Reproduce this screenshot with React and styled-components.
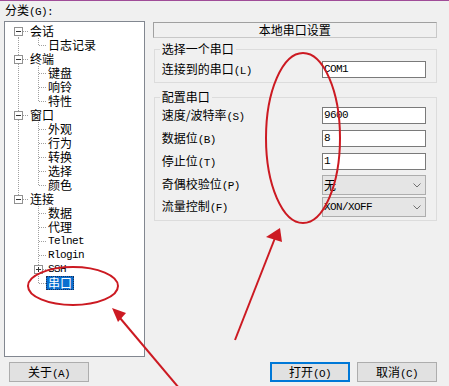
import React from 'react';
import styled, { createGlobalStyle } from 'styled-components';

const Global = createGlobalStyle`
  html, body { margin: 0; padding: 0; background: #f0f0f0; }
  body {
    font-family: "Noto Sans CJK SC", "Liberation Sans", sans-serif;
    font-size: 12px;
    color: #000;
  }
`;

const Window = styled.div`
  position: relative;
  width: 449px;
  height: 386px;
  box-sizing: border-box;
  background: #f0f0f0;
  border-top: 1px solid #a04c98;
  display: flex;
  flex-direction: column;
  padding: 0 12px 4px 4px;
  overflow: hidden;
`;

const Main = styled.div`
  display: flex;
  gap: 8px;
`;

const LeftCol = styled.div`
  width: 142px;
  display: flex;
  flex-direction: column;
`;

const CategoryLabel = styled.div`
  height: 20px;
  line-height: 18px;
  padding-left: 1px;
`;

const Hot = styled.span`
  font-family: "Liberation Mono", "DejaVu Sans Mono", monospace;
  font-size: 11px;
  letter-spacing: -0.6px;
`;

const TreeBox = styled.div`
  height: 336px;
  box-sizing: border-box;
  border: 1px solid #828790;
  background: #fff;
  padding-top: 2px;
`;

const TreeRow = styled.div`
  display: flex;
  height: 14px;
  align-items: stretch;
`;

const TreeLabel = styled.span`
  display: inline-block;
  height: 14px;
  line-height: 14px;
  padding: 0 2px;
  white-space: nowrap;
  ${p => p.$latin && `
    font-family: "Liberation Mono", "DejaVu Sans Mono", monospace;
    font-size: 11px;
    letter-spacing: -0.6px;
  `}
  ${p => p.$selected && `
    background: #0a6fcf;
    color: #fff;
    outline: 1px dotted #1b2f5a;
    outline-offset: -1px;
  `}
`;

const LINE = '#a0a0a0';

function ExpandBox({ x, plus }) {
  return (
    <g>
      <rect x={x + 0.5} y={3.5} width={8} height={8} fill="#fff" stroke="#919191" />
      <line x1={x + 2} y1={7.5} x2={x + 7} y2={7.5} stroke="#333" />
      {plus && <line x1={x + 4.5} y1={5} x2={x + 4.5} y2={10} stroke="#333" />}
    </g>
  );
}

function Guide({ item }) {
  const dash = '1 1';
  if (item.level === 0) {
    return (
      <svg width="23" height="14" style={{ display: 'block', flex: 'none' }}>
        <line x1={13.5} y1={item.up ? 0 : 7} x2={13.5} y2={item.down ? 14 : 8} stroke={LINE} strokeDasharray={dash} />
        <line x1={18} y1={7.5} x2={23} y2={7.5} stroke={LINE} strokeDasharray={dash} />
        <ExpandBox x={9} />
      </svg>
    );
  }
  return (
    <svg width="41" height="14" style={{ display: 'block', flex: 'none' }}>
      {item.rootLine && <line x1={13.5} y1={0} x2={13.5} y2={14} stroke={LINE} strokeDasharray={dash} />}
      <line x1={33.5} y1={0} x2={33.5} y2={item.last ? 8 : 14} stroke={LINE} strokeDasharray={dash} />
      <line x1={34} y1={7.5} x2={41} y2={7.5} stroke={LINE} strokeDasharray={dash} />
      {item.box && <ExpandBox x={29} plus />}
    </svg>
  );
}

const tree = [
  { label: '会话', level: 0, up: false, down: true },
  { label: '日志记录', level: 1, rootLine: true, last: true },
  { label: '终端', level: 0, up: true, down: true },
  { label: '键盘', level: 1, rootLine: true },
  { label: '响铃', level: 1, rootLine: true },
  { label: '特性', level: 1, rootLine: true, last: true },
  { label: '窗口', level: 0, up: true, down: true },
  { label: '外观', level: 1, rootLine: true },
  { label: '行为', level: 1, rootLine: true },
  { label: '转换', level: 1, rootLine: true },
  { label: '选择', level: 1, rootLine: true },
  { label: '颜色', level: 1, rootLine: true, last: true },
  { label: '连接', level: 0, up: true, down: false },
  { label: '数据', level: 1 },
  { label: '代理', level: 1 },
  { label: 'Telnet', level: 1, latin: true },
  { label: 'Rlogin', level: 1, latin: true },
  { label: 'SSH', level: 1, latin: true, box: true },
  { label: '串口', level: 1, last: true, selected: true },
];

const RightCol = styled.div`
  width: 287px;
  padding-top: 21px;
  display: flex;
  flex-direction: column;
`;

const TitleBar = styled.div`
  height: 16px;
  box-sizing: border-box;
  border: 1px solid #a0a0a0;
  border-bottom-color: #c8c8c8;
  border-right-color: #c8c8c8;
  line-height: 14px;
  text-align: center;
`;

const Group = styled.fieldset`
  margin: ${p => p.$top}px 0 0 1px;
  min-width: 0;
  border: 1px solid #dcdcdc;
  padding: ${p => p.$padTop}px 10px ${p => p.$padBottom}px 7px;
  display: flex;
  flex-direction: column;
`;

const GroupTitle = styled.legend`
  padding: 0 2px;
  margin-left: -2px;
  line-height: 14px;
  height: 14px;
`;

const FieldRow = styled.div`
  display: flex;
  align-items: center;
  justify-content: space-between;
  margin-top: ${p => p.$gap || 0}px;
`;

const FieldLabel = styled.span`
  line-height: 14px;
  white-space: nowrap;
`;

const TextInput = styled.div`
  width: 104px;
  height: 17px;
  box-sizing: border-box;
  border: 1px solid #7a7a7a;
  background: #fff;
  padding-left: 1px;
  line-height: 15px;
  font-family: "Liberation Mono", "DejaVu Sans Mono", monospace;
  font-size: 11px;
  letter-spacing: -0.6px;
`;

const Select = styled.div`
  width: 104px;
  height: 20px;
  box-sizing: border-box;
  border: 1px solid #adadad;
  background: #e5e5e5;
  display: flex;
  align-items: center;
  justify-content: space-between;
  padding: 0 4px 0 1px;
`;

const SelectValue = styled.span`
  line-height: 18px;
  ${p => p.$latin && `
    font-family: "Liberation Mono", "DejaVu Sans Mono", monospace;
    font-size: 11px;
    letter-spacing: -0.6px;
  `}
`;

function Chevron() {
  return (
    <svg width="8" height="5" style={{ display: 'block' }}>
      <polyline points="0.5,0.5 4,4 7.5,0.5" fill="none" stroke="#707070" />
    </svg>
  );
}

const Footer = styled.div`
  margin-top: 5px;
  height: 20px;
  display: flex;
  justify-content: space-between;
`;

const ButtonGroup = styled.div`
  display: flex;
  gap: 7px;
`;

const Button = styled.div`
  width: 80px;
  height: 20px;
  box-sizing: border-box;
  margin-left: ${p => p.$offset || 0}px;
  border: 1px solid ${p => (p.$default ? '#0078d7' : '#adadad')};
  box-shadow: ${p => (p.$default ? 'inset 0 0 0 1px #0078d7' : 'none')};
  background: #e1e1e1;
  text-align: center;
  line-height: 18px;
`;

const Annotations = styled.svg`
  position: absolute;
  left: 0;
  top: -1px;
  pointer-events: none;
`;

const RED = '#cc1a22';

export default function App() {
  return (
    <>
      <Global />
      <Window>
        <Main>
          <LeftCol>
            <CategoryLabel>分类<Hot>(G):</Hot></CategoryLabel>
            <TreeBox>
              {tree.map(item => (
                <TreeRow key={item.label}>
                  <Guide item={item} />
                  <TreeLabel $latin={item.latin} $selected={item.selected}>{item.label}</TreeLabel>
                </TreeRow>
              ))}
            </TreeBox>
          </LeftCol>
          <RightCol>
            <TitleBar>本地串口设置</TitleBar>
            <Group $top={4} $padTop={5} $padBottom={4}>
              <GroupTitle>选择一个串口</GroupTitle>
              <FieldRow>
                <FieldLabel>连接到的串口<Hot>(L)</Hot></FieldLabel>
                <TextInput>COM1</TextInput>
              </FieldRow>
            </Group>
            <Group $top={7} $padTop={3} $padBottom={3}>
              <GroupTitle>配置串口</GroupTitle>
              <FieldRow>
                <FieldLabel>速度/波特率<Hot>(S)</Hot></FieldLabel>
                <TextInput>9600</TextInput>
              </FieldRow>
              <FieldRow $gap={6}>
                <FieldLabel>数据位<Hot>(B)</Hot></FieldLabel>
                <TextInput>8</TextInput>
              </FieldRow>
              <FieldRow $gap={6}>
                <FieldLabel>停止位<Hot>(T)</Hot></FieldLabel>
                <TextInput>1</TextInput>
              </FieldRow>
              <FieldRow $gap={5}>
                <FieldLabel>奇偶校验位<Hot>(P)</Hot></FieldLabel>
                <Select>
                  <SelectValue>无</SelectValue>
                  <Chevron />
                </Select>
              </FieldRow>
              <FieldRow $gap={2}>
                <FieldLabel>流量控制<Hot>(F)</Hot></FieldLabel>
                <Select>
                  <SelectValue $latin>XON/XOFF</SelectValue>
                  <Chevron />
                </Select>
              </FieldRow>
            </Group>
          </RightCol>
        </Main>
        <Footer>
          <Button $offset={5}>关于<Hot>(A)</Hot></Button>
          <ButtonGroup>
            <Button $default>打开<Hot>(O)</Hot></Button>
            <Button>取消<Hot>(C)</Hot></Button>
          </ButtonGroup>
        </Footer>
        <Annotations width="449" height="386" viewBox="0 0 449 386">
          <ellipse cx="73" cy="286" rx="45" ry="19" fill="none" stroke={RED} strokeWidth="2" />
          <line x1="179" y1="388" x2="120" y2="318" stroke={RED} strokeWidth="2" />
          <polygon points="112,308 126,313 118,322" fill={RED} />
          <ellipse cx="303" cy="138" rx="37" ry="85" fill="none" stroke={RED} strokeWidth="2" />
          <line x1="235" y1="340" x2="275" y2="238" stroke={RED} strokeWidth="2" />
          <polygon points="280,228 266,237 282,242" fill={RED} />
        </Annotations>
      </Window>
    </>
  );
}
